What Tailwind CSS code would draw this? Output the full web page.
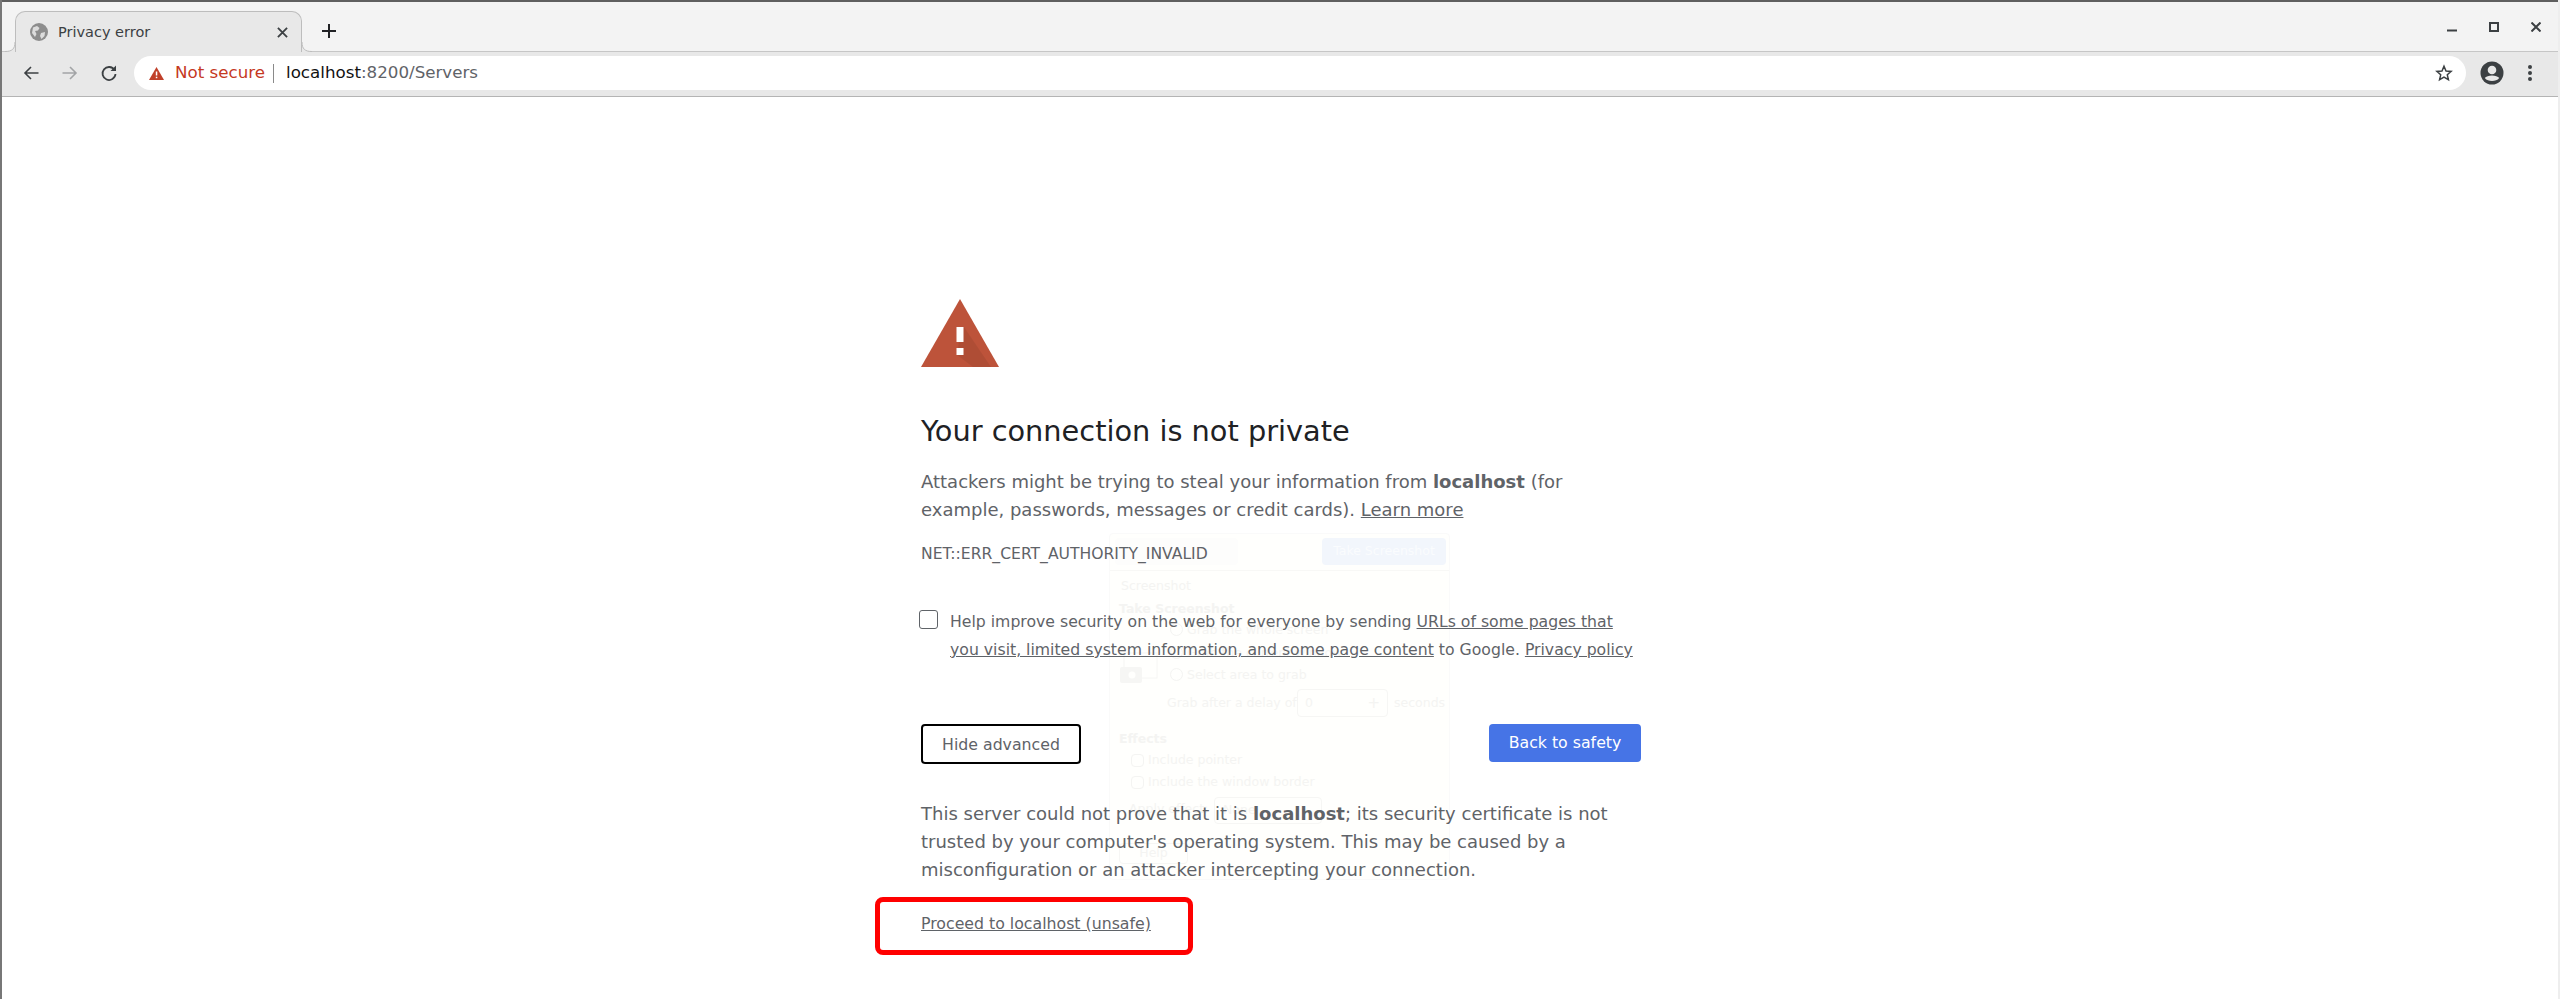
<!DOCTYPE html>
<html>
<head>
<meta charset="utf-8">
<title>Privacy error</title>
<script src="https://cdn.jsdelivr.net/npm/@tailwindcss/browser@4"></script>
</head>
<body class="bg-white font-['DejaVu_Sans',sans-serif] overflow-hidden">
<div class="w-[2560px] h-[999px] relative flex flex-col overflow-hidden border-l-2 border-r-2 border-l-[#777777] border-r-[#eeeeee]">
  <!-- tab strip -->
  <div class="h-[52px] bg-[#f3f3f3] border-t-2 border-[#5f5f5f] flex items-end relative shrink-0">
    <div class="absolute left-0 right-0 bottom-0 h-px bg-[#c6c6c6]"></div>
    <div class="relative ml-[13px] w-[287px] h-[41px] bg-[#e8e8e8] border border-b-0 border-[#bdbdbd] rounded-t-[10px] flex items-center pl-[14px] pr-[13px] z-10">
      <svg class="absolute left-[-11px] bottom-0 w-[10px] h-[10px]" viewBox="0 0 10 10"><path d="M0 9.5 C7 9.5 10 7 10 0 V10 H0Z" fill="#e8e8e8"/><path d="M0 9.5 C7 9.5 10 7 10 0" fill="none" stroke="#bdbdbd"/></svg>
      <svg class="absolute right-[-11px] bottom-0 w-[10px] h-[10px]" viewBox="0 0 10 10"><path d="M10 9.5 C3 9.5 0 7 0 0 V10 H10Z" fill="#e8e8e8"/><path d="M10 9.5 C3 9.5 0 7 0 0" fill="none" stroke="#bdbdbd"/></svg>
      <svg class="w-[18px] h-[18px] shrink-0" viewBox="0 0 18 18"><circle cx="9" cy="9" r="9" fill="#8d8d8d"/><path d="M3 4.5 L7 3 L9.5 5 L8 7.5 L5 8 L6.5 11 L5 14 L2 10Z M11 10 L15 9 L14.5 13 L11.5 16 L10 13Z" fill="#dcdcdc"/></svg>
      <span class="ml-[10px] text-[14.5px] text-[#3c4043] leading-none">Privacy error</span>
      <svg class="w-[11px] h-[11px] ml-auto" viewBox="0 0 12 12"><path d="M1 1 L11 11 M11 1 L1 11" stroke="#3c4043" stroke-width="2"/></svg>
    </div>
    <svg class="w-[14px] h-[14px] ml-[20px] mb-[14px]" viewBox="0 0 14 14"><path d="M7 0 V14 M0 7 H14" stroke="#202124" stroke-width="2"/></svg>
    <div class="ml-auto flex items-end mb-[20px] mr-[17px] gap-[32px]">
      <svg class="w-[10px] h-[4px]" viewBox="0 0 10 4"><path d="M0 2.5 H10" stroke="#3c4043" stroke-width="2"/></svg>
      <svg class="w-[10px] h-[10px]" viewBox="0 0 10 10"><rect x="1" y="1" width="8" height="8" fill="none" stroke="#3c4043" stroke-width="2"/></svg>
      <svg class="w-[10px] h-[10px]" viewBox="0 0 10 10"><path d="M0.5 0.5 L9.5 9.5 M9.5 0.5 L0.5 9.5" stroke="#3c4043" stroke-width="2"/></svg>
    </div>
  </div>
  <!-- toolbar -->
  <div class="h-[45px] bg-[#e8e8e8] border-b border-[#b4b4b4] flex items-center shrink-0 pl-[21px] pr-[25px] pb-[2px]">
    <svg class="w-[16px] h-[16px] shrink-0" viewBox="0 0 16 16"><path d="M15.5 8 H2 M8 2 L2 8 L8 14" fill="none" stroke="#3c4043" stroke-width="1.6"/></svg>
    <svg class="w-[16px] h-[16px] ml-[23px] shrink-0" viewBox="0 0 16 16"><path d="M0.5 8 H14 M8 2 L14 8 L8 14" fill="none" stroke="#a2a4a6" stroke-width="1.6"/></svg>
    <svg class="w-[18px] h-[18px] ml-[22px] shrink-0" viewBox="0 0 18 18"><path d="M14.5 6 A6.5 6.5 0 1 0 15.5 10" fill="none" stroke="#3c4043" stroke-width="1.8"/><path d="M10.5 7 H16 V1.5Z" fill="#3c4043"/></svg>
    <div class="ml-[16px] flex-1 h-[34px] bg-white rounded-full flex items-center pl-[15px] pr-[13px] text-[16.7px]">
      <svg class="w-[15px] h-[13px] shrink-0" viewBox="0 0 15 13"><path d="M7.5 0 L15 13 H0Z" fill="#c0402a"/><rect x="6.8" y="4.5" width="1.5" height="4" fill="#fff"/><rect x="6.8" y="9.7" width="1.5" height="1.5" fill="#fff"/></svg>
      <span class="ml-[11px] text-[#c5391f]">Not secure</span>
      <span class="ml-[8px] w-px h-[19px] bg-[#8a8a8a]"></span>
      <span class="ml-[12px] text-[#111111]">localhost<span class="text-[#5f6368]">:8200/Servers</span></span>
      <svg class="w-[18px] h-[18px] ml-auto" viewBox="0 0 24 24"><path d="M12 3 L14.7 9.3 L21.5 9.9 L16.4 14.4 L17.9 21 L12 17.5 L6.1 21 L7.6 14.4 L2.5 9.9 L9.3 9.3Z" fill="none" stroke="#3c4043" stroke-width="2"/></svg>
    </div>
    <svg class="w-[24px] h-[24px] ml-[14px] shrink-0" viewBox="0 0 24 24"><circle cx="12" cy="12" r="11.5" fill="#3c4043"/><circle cx="12" cy="9" r="4.3" fill="#e8e8e8"/><path d="M4.8 17 C7 13.6 17 13.6 19.2 17 C17.5 19.2 15 20 12 20 C9 20 6.5 19.2 4.8 17Z" fill="#e8e8e8"/></svg>
    <svg class="w-[6px] h-[18px] ml-[23px] shrink-0" viewBox="0 0 6 18"><circle cx="3" cy="3" r="2" fill="#3c4043"/><circle cx="3" cy="9" r="2" fill="#3c4043"/><circle cx="3" cy="15" r="2" fill="#3c4043"/></svg>
  </div>

  <!-- page -->
  <main class="flex-1 relative pl-[919px] pt-[202px] text-[#5f6368] text-[18px]">
    <!-- ghost window that shows through -->
    <div class="absolute left-[1107px] top-[436px] w-[341px] h-[347px] border border-[#fafafa] rounded-[4px] bg-[#fffffd] text-[#f4f4f2] text-[12.5px] leading-none pointer-events-none">
      <div class="absolute left-[5px] top-[4px] w-[123px] h-[27px] bg-[#fdfdfc] rounded-sm"></div>
      <div class="absolute left-0 right-0 top-[36px] h-px bg-[#f8f8f6]"></div>
      <div class="absolute left-[212px] top-[4px] w-[124px] h-[27px] bg-[#f2f6fc] rounded-sm flex items-center justify-center text-[#fafcfe]">Take Screenshot</div>
      <div class="absolute left-[11px] top-[46px]">Screenshot</div>
      <div class="absolute left-[9px] top-[69px] font-bold">Take Screenshot</div>
      <span class="absolute left-[60px] top-[89px] w-[13px] h-[13px] rounded-full border border-[#f4f4f2]"></span>
      <div class="absolute left-[77px] top-[90px]">Grab the whole screen</div>
      <span class="absolute left-[60px] top-[112px] w-[13px] h-[13px] rounded-full border border-[#f4f4f2]"></span>
      <div class="absolute left-[77px] top-[113px]">Grab the current window</div>
      <span class="absolute left-[60px] top-[134px] w-[13px] h-[13px] rounded-full border border-[#f4f4f2]"></span>
      <div class="absolute left-[77px] top-[135px]">Select area to grab</div>
      <svg class="absolute left-[10px] top-[118px] w-[38px] h-[32px]" viewBox="0 0 38 32"><rect x="4" y="1" width="33" height="25" fill="none" stroke="#f6f6f4"/><rect x="0" y="15" width="22" height="16" rx="2" fill="#f6f6f4"/><circle cx="12" cy="23" r="3.5" fill="#fffffd"/></svg>
      <div class="absolute left-[57px] top-[163px]">Grab after a delay of</div>
      <div class="absolute left-[187px] top-[155px] w-[91px] h-[28px] border border-[#f6f6f4] rounded-sm flex items-center justify-between pl-[7px] pr-[7px]"><span>0</span><span class="text-[15px]">+</span></div>
      <div class="absolute left-[284px] top-[163px]">seconds</div>
      <div class="absolute left-[9px] top-[199px] font-bold">Effects</div>
      <span class="absolute left-[21px] top-[220px] w-[13px] h-[13px] rounded-sm border border-[#f4f4f2]"></span>
      <div class="absolute left-[38px] top-[220px]">Include pointer</div>
      <span class="absolute left-[21px] top-[242px] w-[13px] h-[13px] rounded-sm border border-[#f4f4f2]"></span>
      <div class="absolute left-[38px] top-[242px]">Include the window border</div>
      <div class="absolute left-[19px] top-[269px]">Apply effect:</div>
      <div class="absolute left-[104px] top-[263px] w-[108px] h-[27px] border border-[#f6f6f4] rounded-sm flex items-center pl-[8px]">None</div>
      <div class="absolute left-[9px] top-[309px] w-[69px] h-[21px] border border-[#f6f6f4] rounded-sm flex items-center justify-center">Help</div>
    </div>

    <div class="relative w-[720px]">
      <svg class="w-[78px] h-[68px] block" viewBox="0 0 78 68">
        <path d="M39 0 L78 68 H0Z" fill="#bd533a"/>
        <path d="M40 28 L43 28 L70 68 H52 L36 56Z" fill="#000" opacity="0.07"/>
        <rect x="35.5" y="28" width="7" height="15" fill="#fff"/>
        <rect x="35.5" y="49" width="7" height="7" fill="#fff"/>
      </svg>
      <h1 class="mt-[48px] text-[28.8px] leading-[33px] text-[#202124] font-normal">Your connection is not private</h1>
      <p class="mt-[20px] leading-[28px]">Attackers might be trying to steal your information from <b class="font-bold">localhost</b> (for<br>example, passwords, messages or credit cards). <a class="underline">Learn more</a></p>
      <div class="mt-[18px] text-[15.6px] leading-[24px]">NET::ERR_CERT_AUTHORITY_INVALID</div>
      <div class="mt-[42px] flex relative">
        <span class="absolute left-[-2px] top-[2px] w-[19px] h-[19px] border border-[#5f6368] rounded-[3px] bg-white"></span>
        <p class="ml-[29px] text-[15.7px] leading-[28px] whitespace-nowrap">Help improve security on the web for everyone by sending <a class="underline">URLs of some pages that</a><br><a class="underline">you visit, limited system information, and some page content</a> to Google. <a class="underline">Privacy policy</a></p>
      </div>
      <div class="mt-[60px] flex justify-between items-start">
        <button class="w-[160px] h-[40px] border-2 border-black rounded-[4px] bg-white text-[15.75px] text-[#5f6368] pt-[2px]">Hide advanced</button>
        <button class="w-[152px] h-[38px] rounded-[4px] bg-[#4674e6] text-[15.75px] text-white">Back to safety</button>
      </div>
      <p class="mt-[36px] leading-[28px]">This server could not prove that it is <b class="font-bold">localhost</b>; its security certificate is not<br>trusted by your computer's operating system. This may be caused by a<br>misconfiguration or an attacker intercepting your connection.</p>
      <p class="mt-[26px] text-[15.75px] leading-[28px]"><a class="underline">Proceed to localhost (unsafe)</a></p>
      <div class="absolute left-[-46px] top-[598px] w-[318px] h-[58px] border-[5px] border-[#ff0000] rounded-[8px]"></div>
    </div>
  </main>
</div>
</body>
</html>
